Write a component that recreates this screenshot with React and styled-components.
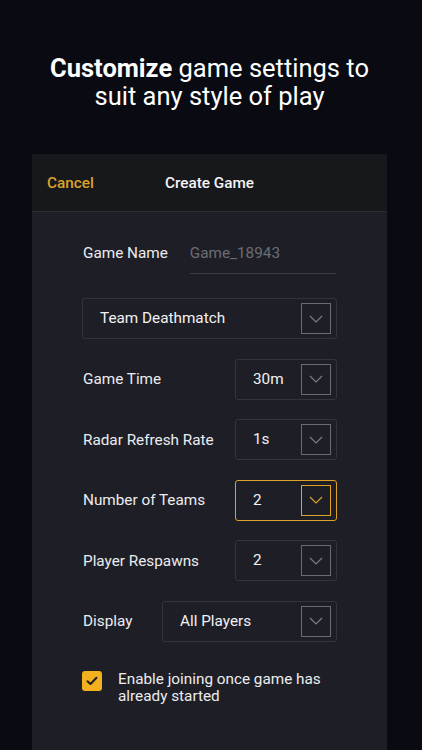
import React from "react";
import styled, { createGlobalStyle } from "styled-components";

const GlobalStyle = createGlobalStyle`
  html, body {
    margin: 0;
    padding: 0;
    background: #0a0a12;
  }
  body {
    font-family: Roboto, "Liberation Sans", sans-serif;
    color: #f2f2f4;
  }
`;

const ACCENT = "#dca22a";

export default function App() {
  return (
    <Page>
      <GlobalStyle />
      <Headline>
        <strong>Customize</strong> game settings to
        <br />
        suit any style of play
      </Headline>
      <Card>
        <Header>
          <CancelButton>Cancel</CancelButton>
          <Title>Create Game</Title>
          <span />
        </Header>
        <Body>
          <NameRow>
            <Label>Game Name</Label>
            <NameInput>Game_18943</NameInput>
          </NameRow>
          <Fields>
            <Select value="Team Deathmatch" width="255px" />
            <FormRow>
              <Label>Game Time</Label>
              <Select value="30m" width="102px" />
            </FormRow>
            <FormRow>
              <Label>Radar Refresh Rate</Label>
              <Select value="1s" width="102px" />
            </FormRow>
            <FormRow>
              <Label>Number of Teams</Label>
              <Select value="2" width="102px" active />
            </FormRow>
            <FormRow>
              <Label>Player Respawns</Label>
              <Select value="2" width="102px" />
            </FormRow>
            <FormRow>
              <Label>Display</Label>
              <Select value="All Players" width="175px" />
            </FormRow>
          </Fields>
          <CheckRow>
            <CheckBox>
              <svg width="12" height="10" viewBox="0 0 12 10">
                <path
                  d="M1.5 5.2 L4.5 8 L10.5 1.8"
                  fill="none"
                  stroke="#1d1d22"
                  strokeWidth="2"
                  strokeLinecap="round"
                  strokeLinejoin="round"
                />
              </svg>
            </CheckBox>
            <CheckText>Enable joining once game has already started</CheckText>
          </CheckRow>
        </Body>
      </Card>
    </Page>
  );
}

function Select({ value, width, active }) {
  return (
    <SelectBox $width={width} $active={active}>
      <SelectValue>{value}</SelectValue>
      <ArrowBox $active={active}>
        <svg width="14" height="8" viewBox="0 0 14 8">
          <path
            d="M1 1 L7 7 L13 1"
            fill="none"
            stroke={active ? ACCENT : "#7c7d84"}
            strokeWidth="1.2"
          />
        </svg>
      </ArrowBox>
    </SelectBox>
  );
}

const Page = styled.div`
  height: 100vh;
  display: flex;
  flex-direction: column;
  padding: 0 35px 0 32px;
  box-sizing: border-box;
  overflow: hidden;
`;

const Headline = styled.h1`
  margin: 54px 0 44px;
  font-size: 25.5px;
  line-height: 28px;
  font-weight: 400;
  text-align: center;
  color: #ffffff;

  strong {
    font-weight: 700;
  }
`;

const Card = styled.div`
  flex: 1;
  display: flex;
  flex-direction: column;
  background: #1e1f26;
`;

const Header = styled.div`
  height: 57px;
  display: grid;
  grid-template-columns: 1fr auto 1fr;
  align-items: center;
  padding: 0 15px;
  background: #17181c;
  border-bottom: 1px solid #2b2c33;
`;

const CancelButton = styled.span`
  color: ${ACCENT};
  font-size: 15.3px;
  font-weight: 500;
`;

const Title = styled.span`
  color: #f4f4f6;
  font-size: 15.3px;
  font-weight: 500;
`;

const Body = styled.div`
  padding: 20px 50px 0 50px;
`;

const NameRow = styled.div`
  display: flex;
  align-items: center;
  height: 42px;
  margin-bottom: 24px;
`;

const Label = styled.span`
  font-size: 15.3px;
  color: #ececef;
  padding-left: 1px;
`;

const NameInput = styled.div`
  margin-left: 22px;
  width: 146px;
  height: 42px;
  box-sizing: border-box;
  display: flex;
  align-items: center;
  border-bottom: 1px solid #393a42;
  font-size: 15.3px;
  color: #6c6d75;
`;

const Fields = styled.div`
  display: flex;
  flex-direction: column;
  align-items: flex-start;
  gap: 19.5px;
`;

const FormRow = styled.div`
  width: 100%;
  display: flex;
  align-items: center;
  justify-content: space-between;
`;

const SelectBox = styled.div`
  width: ${(p) => p.$width};
  height: 41px;
  box-sizing: border-box;
  display: flex;
  align-items: center;
  justify-content: space-between;
  padding: 0 5px 0 17px;
  border: 1px solid ${(p) => (p.$active ? ACCENT : "#33343c")};
  border-radius: 3px;
`;

const SelectValue = styled.span`
  font-size: 15.3px;
  color: #f2f2f4;
  margin-top: -1px;
`;

const ArrowBox = styled.div`
  width: 30px;
  height: 31px;
  box-sizing: border-box;
  display: flex;
  align-items: center;
  justify-content: center;
  border: 1.5px solid ${(p) => (p.$active ? ACCENT : "#6a6b72")};
`;

const CheckRow = styled.div`
  display: flex;
  align-items: flex-start;
  gap: 16px;
  margin-top: 29px;
`;

const CheckBox = styled.div`
  flex: none;
  width: 20px;
  height: 20px;
  border-radius: 3px;
  background: #f3b01f;
  display: flex;
  align-items: center;
  justify-content: center;
`;

const CheckText = styled.span`
  font-size: 15.3px;
  line-height: 17px;
  color: #ececef;
  margin-top: 0;
`;
